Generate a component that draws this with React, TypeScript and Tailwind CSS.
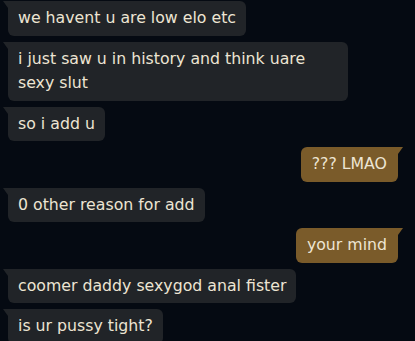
import React from 'react';

type Message = { from: 'them' | 'me'; text: string };

const MESSAGES: Message[] = [
  { from: 'them', text: 'we havent u are low elo etc' },
  { from: 'them', text: 'i just saw u in history and think uare sexy slut' },
  { from: 'them', text: 'so i add u' },
  { from: 'me', text: '??? LMAO' },
  { from: 'them', text: '0 other reason for add' },
  { from: 'me', text: 'your mind' },
  { from: 'them', text: 'coomer daddy sexygod anal fister' },
  { from: 'them', text: 'is ur pussy tight?' },
];

const Bubble: React.FC<{ msg: Message }> = ({ msg }) => {
  const mine = msg.from === 'me';
  const fill = mine ? '#7a5b2a' : '#212428';

  // small tail sits on the top corner facing the sender
  const tail = (
    <svg width="5" height="8" viewBox="0 0 5 8" className="shrink-0">
      <path d={mine ? 'M0 0 L5 0 L0 7 Z' : 'M5 0 L0 0 L5 7 Z'} fill={fill} />
    </svg>
  );

  return (
    <div className={mine ? 'flex self-end pr-[12px]' : 'flex self-start pl-[3px]'}>
      {!mine && tail}
      <div
        className={
          mine
            ? 'max-w-[340px] rounded-md rounded-tr-none bg-[#7a5b2a] px-[11px] py-[5px]'
            : 'max-w-[340px] rounded-md rounded-tl-none bg-[#212428] px-[10px] py-[5px]'
        }
      >
        <p className="text-[15.75px] leading-[24.5px] text-[#ede5d3]">{msg.text}</p>
      </div>
      {mine && tail}
    </div>
  );
};

export default function App() {
  return (
    <div
      className="flex h-[341px] w-[415px] flex-col gap-[6px] overflow-hidden bg-[#050a12] pt-[1px]"
      style={{ fontFamily: '"DejaVu Sans", sans-serif' }}
    >
      {MESSAGES.map((m, i) => (
        <Bubble key={i} msg={m} />
      ))}
    </div>
  );
}
